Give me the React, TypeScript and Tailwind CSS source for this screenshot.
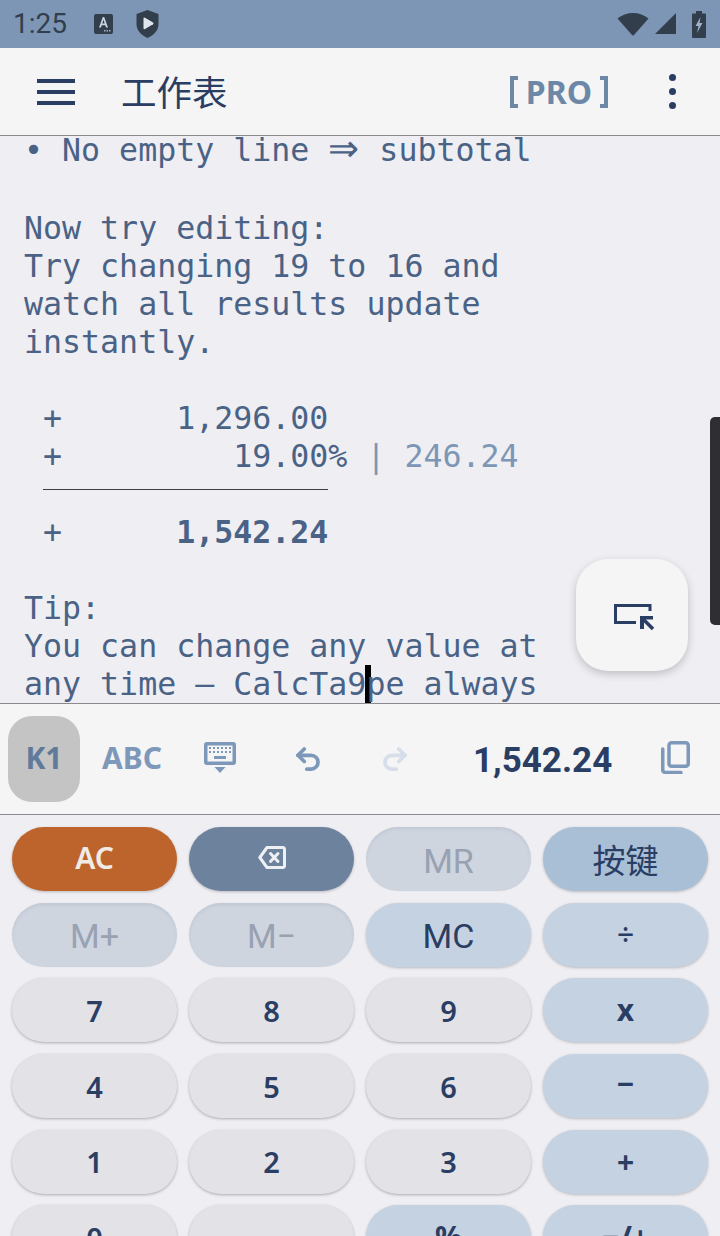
import React from 'react';
import { Undo2, Redo2 } from 'lucide-react';

type Variant = 'num' | 'op' | 'sym' | 'mem' | 'dim' | 'accent' | 'danger' | 'back';

const NOTO = "font-['Noto_Sans',sans-serif]";
const ROBOTO = "font-['Roboto',sans-serif]";

const variants: Record<Variant, string> = {
  num: `${NOTO} bg-[#e2e2e7] text-[#2a3d63] shadow-[0_1px_3px_rgba(0,0,0,0.28)] font-semibold text-[29px]`,
  op: `${NOTO} bg-[#c5d2e2] text-[#2a3d63] shadow-[0_1px_3px_rgba(0,0,0,0.22)] font-bold text-[30px]`,
  sym: `${NOTO} bg-[#c5d2e2] text-[#2a3d63] shadow-[0_1px_3px_rgba(0,0,0,0.22)] font-medium text-[30px]`,
  mem: `${ROBOTO} pt-[3px] bg-[#c5d2e2] text-[#2a3d63] shadow-[0_1px_3px_rgba(0,0,0,0.22)] text-[34px]`,
  dim: `${ROBOTO} pt-[3px] bg-[#cfd5df] text-[#98a2b3] shadow-[inset_0_2px_3px_rgba(90,110,140,0.12),0_0_2px_rgba(0,0,0,0.06)] text-[34px]`,
  accent: "font-['Noto_Sans_CJK_SC',sans-serif] bg-[#a9bfd5] text-[#2a3d63] shadow-[0_1px_3px_rgba(0,0,0,0.22)] text-[33px]",
  danger: `${NOTO} pb-[3px] bg-[#bd642c] text-[#f0ebe6] shadow-[0_1px_3px_rgba(0,0,0,0.22)] font-semibold text-[30px]`,
  back: 'bg-[#6d829c] text-[#eef0f3] shadow-[0_1px_3px_rgba(0,0,0,0.22)]',
};

const Key = ({ label, variant }: { label?: React.ReactNode; variant: Variant }) => (
  <div className={`h-16 rounded-[32px] flex items-center justify-center leading-none ${variants[variant]}`}>
    {label}
  </div>
);

const StatusBar = () => (
  <div className="h-12 bg-[#7d96b5] flex items-center justify-between pl-[13px] pr-[14px] text-[#323e4c]">
    <div className="flex items-center">
      <span className={`text-[28px] w-[54px] leading-none ${ROBOTO}`}>1:25</span>
      <svg className="ml-[27px]" width="19" height="20" viewBox="0 0 19 20">
        <rect x="0" y="0" width="19" height="20" rx="2" fill="#323e4c" />
        <path d="M5 13.500 8.800 3h1.400L14 13.500h-2l-.7-2.200H7.700L7 13.500zM8.300 9.500h2.400L9.500 5.800z" fill="#c9d3df" />
        <path d="M10 16h1.500v1.500H10zM12.500 16H14v1.500h-1.500zM15 16h1.500v1.500H15z" fill="#9fb2c9" />
      </svg>
      <svg className="ml-[23px]" width="23" height="28" viewBox="0 0 23 28">
        <path d="M11.500 0 22.500 4v10c0 6.500-4.500 11-11 14C5 25 .500 20.500.500 14V4z" fill="#323e4c" />
        <path d="M7.500 8.500a1 1 0 0 1 1.500-.8l8 4.800a1 1 0 0 1 0 1.700l-8 4.800a1 1 0 0 1-1.500-.8z" fill="#dfe5ec" />
      </svg>
    </div>
    <div className="flex items-center">
      <svg width="32" height="26" viewBox="0 0 32 26">
        <path d="M0.500 7.500C9 0 23 0 31.500 7.500L17 24a1.500 1.500 0 0 1-2 0z" fill="#323e4c" />
      </svg>
      <svg className="ml-[5px]" width="23" height="24" viewBox="0 0 23 24">
        <path d="M22 1v21H1z" fill="#323e4c" />
      </svg>
      <svg className="ml-[15px]" width="14" height="27" viewBox="0 0 14 27">
        <path d="M4 0h6v2.500h3a1 1 0 0 1 1 1V26a1 1 0 0 1-1 1H1a1 1 0 0 1-1-1V3.500a1 1 0 0 1 1-1h3z" fill="#323e4c" />
        <path d="M8.500 6 3.500 15h3L5 22l5.500-10h-3z" fill="#9fb2c9" />
      </svg>
    </div>
  </div>
);

const Header = () => (
  <div className="h-[88px] bg-[#f5f5f6] border-b border-[#8a8a8e] flex items-center text-[#2a3d63]">
    <div className="ml-[37px] w-[38px] flex flex-col gap-[7px]">
      <div className="h-1 bg-[#2a3d63]" />
      <div className="h-1 bg-[#2a3d63]" />
      <div className="h-1 bg-[#2a3d63]" />
    </div>
    <span className="ml-[46px] -mt-[2px] text-[35.5px] leading-none font-['Noto_Sans_CJK_SC',sans-serif]">工作表</span>
    <div className={`ml-auto flex items-center text-[#6d87a6] font-bold leading-none ${NOTO}`}>
      <div className="w-[8px] h-8 border-4 border-r-0 border-[#6d87a6]" />
      <span className="mx-[8px] text-[32px]">PRO</span>
      <div className="w-[8px] h-8 border-4 border-l-0 border-[#6d87a6]" />
    </div>
    <div className="ml-[61px] mr-[44px] flex flex-col gap-[7px]">
      <div className="size-[7px] rounded-full bg-[#2a3d63]" />
      <div className="size-[7px] rounded-full bg-[#2a3d63]" />
      <div className="size-[7px] rounded-full bg-[#2a3d63]" />
    </div>
  </div>
);

const Line = ({ children }: { children?: React.ReactNode }) => (
  <div className="h-[38px] leading-[38px] whitespace-pre">{children}</div>
);

const Sheet = () => (
  <div className="relative h-[567px] overflow-hidden bg-[#eeeef3]">
    <div className="-mt-[5px] pl-6 text-[31.6px] text-[#4a6285] font-['DejaVu_Sans_Mono',monospace]">
      <div className="h-[40px] leading-[38px] whitespace-pre">
        {'• No empty line '}
        <span className="inline-block w-[32px] text-[37px] leading-[30px] font-['Liberation_Sans',sans-serif]">⇒</span>
        {' subtotal'}
      </div>
      <Line />
      <Line>Now try editing:</Line>
      <Line>Try changing 19 to 16 and</Line>
      <Line>watch all results update</Line>
      <Line>instantly.</Line>
      <Line />
      <Line> +      1,296.00</Line>
      <Line>
        {' +         19.00%'}
        <span className="text-[#7d96b5]"> | 246.24</span>
      </Line>
      <div className="h-[38px] pt-[14px] pl-[19px]">
        <div className="w-[285px] h-px bg-[#3a3f48]" />
      </div>
      <Line>
        {' +      '}
        <span className="font-bold">1,542.24</span>
      </Line>
      <Line />
      <Line>Tip:</Line>
      <Line>You can change any value at</Line>
      <Line>
        any time — CalcTa9
        <span className="relative">
          <span className="absolute -left-px top-[-1px] w-[6px] h-[40px] bg-black" />
        </span>
        <span className="relative">pe always</span>
      </Line>
    </div>
    {/* scrollbar */}
    <div className="absolute right-0 top-[281px] w-[10px] h-[208px] rounded-l-[5px] bg-[#2f2f33]" />
    {/* floating button */}
    <div className="absolute left-[576px] top-[423px] size-28 rounded-[32px] bg-[#f5f5f6] shadow-[0_3px_8px_rgba(0,0,0,0.2)] flex items-center justify-center">
      <svg width="40" height="27" viewBox="0 0 40 27" className="ml-[4px] mt-[4px]">
        <path d="M36 7V1.500H1.500v17H22" fill="none" stroke="#2a3d63" strokeWidth="3" />
        <path d="M26 12h13v3.500h-9v9.500h-4z" fill="#2a3d63" />
        <path d="M28.500 14.500 39 25" stroke="#2a3d63" strokeWidth="3.500" />
      </svg>
    </div>
  </div>
);

const Toolbar = () => (
  <div className="h-[112px] bg-[#f5f5f6] border-y border-[#8a8a8e] flex items-center">
    <div className={`ml-2 w-[72px] h-[86px] pb-[2px] rounded-[24px] bg-[#c4c4c4] flex items-center justify-center text-[#5f7a9b] text-[30px] font-bold leading-none ${NOTO}`}>
      K1
    </div>
    <span className={`ml-[22px] -mt-[2px] w-[60px] text-[#7d98b9] text-[30px] font-bold leading-none whitespace-nowrap ${NOTO}`}>ABC</span>
    <svg className="ml-[42px] -mt-[2px]" width="32" height="32" viewBox="0 0 32 32">
      <rect x="0" y="0" width="32" height="23" rx="3" fill="#7d98b9" />
      <rect x="3.500" y="3.500" width="25" height="16" fill="#f5f5f6" />
      <g fill="#7d98b9">
        <path d="M5 5h2v2H5zM9 5h2v2H9zM13 5h2v2h-2zM17 5h2v2h-2zM21 5h2v2h-2zM25 5h2v2h-2z" />
        <path d="M5 9h2v2H5zM9 9h2v2H9zM13 9h2v2h-2zM17 9h2v2h-2zM21 9h2v2h-2zM25 9h2v2h-2z" />
        <rect x="10" y="14" width="12" height="3" />
      </g>
      <path d="M10.500 25h11L16 31z" fill="#7d98b9" />
    </svg>
    <Undo2 className="ml-[57px] text-[#7d98b9]" size={30} strokeWidth={3} />
    <Redo2 className="ml-[57px] text-[#d6dfe9]" size={30} strokeWidth={3} />
    <span className={`ml-[63px] mt-[3px] text-[#2a3d63] text-[35px] font-bold leading-none ${ROBOTO}`}>1,542.24</span>
    <svg className="ml-[49px] -mt-[3px]" width="29" height="33" viewBox="0 0 29 33" fill="none" stroke="#7d98b9" strokeWidth="3.500">
      <rect x="8" y="1.750" width="19.250" height="23.500" rx="2.500" />
      <path d="M1.750 8v21a2.500 2.500 0 0 0 2.500 2.500H20" strokeLinecap="round" />
    </svg>
  </div>
);

const Backspace = () => (
  <svg width="28" height="23" viewBox="0 0 28 23" fill="none" stroke="#eef0f3" strokeWidth="3" strokeLinejoin="round" strokeLinecap="round" className="-mt-[3px]">
    <path d="M9 1.500h16a1.500 1.500 0 0 1 1.500 1.500v17a1.500 1.500 0 0 1-1.500 1.500H9L1.800 11.500z" />
    <path d="M12.500 7.500 20 15.500M20 7.500 12.500 15.500" />
  </svg>
);

const Keypad = () => (
  <div className="grid grid-cols-4 gap-x-3 gap-y-[11.7px] px-3 pt-3 bg-[#eeeef3]">
    <Key label="AC" variant="danger" />
    <Key label={<Backspace />} variant="back" />
    <Key label="MR" variant="dim" />
    <Key label="按键" variant="accent" />
    <Key label="M+" variant="dim" />
    <Key label="M−" variant="dim" />
    <Key label="MC" variant="mem" />
    <Key label="÷" variant="sym" />
    <Key label="7" variant="num" />
    <Key label="8" variant="num" />
    <Key label="9" variant="num" />
    <Key label="x" variant="op" />
    <Key label="4" variant="num" />
    <Key label="5" variant="num" />
    <Key label="6" variant="num" />
    <Key label={<span className="-mt-[4px]">−</span>} variant="op" />
    <Key label="1" variant="num" />
    <Key label="2" variant="num" />
    <Key label="3" variant="num" />
    <Key label="+" variant="op" />
    <Key label="0" variant="num" />
    <Key label="." variant="num" />
    <Key label="%" variant="op" />
    <Key label="−/+" variant="op" />
  </div>
);

export default function App() {
  return (
    <div className="w-[720px] h-[1236px] overflow-hidden bg-[#eeeef3]">
      <StatusBar />
      <Header />
      <Sheet />
      <Toolbar />
      <Keypad />
    </div>
  );
}
